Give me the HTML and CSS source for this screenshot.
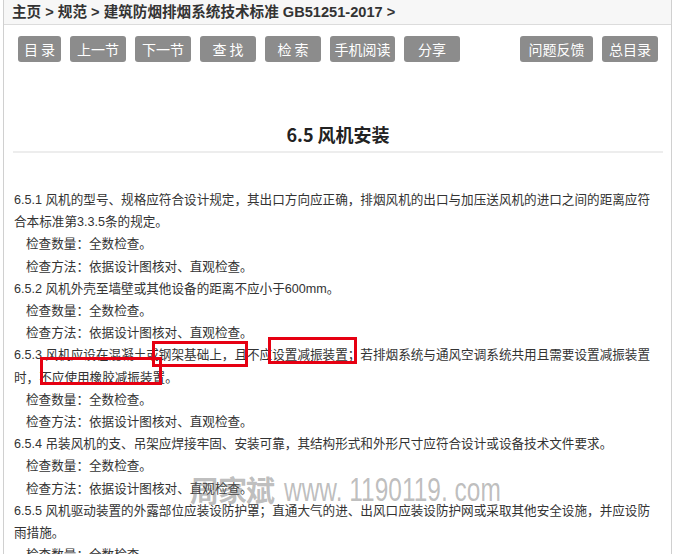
FILE: index.html
```html
<!DOCTYPE html>
<html lang="zh-CN">
<head>
    <meta charset="UTF-8">
    <title>6.5 风机安装</title>
    <link rel="stylesheet" href="styles.css">
</head>
<body>
<div class="page">
    <div class="crumbs">主页 &gt; 规范 &gt; 建筑防烟排烟系统技术标准 GB51251-2017 &gt;</div>

    <div class="tools">
        <div class="group">
            <a class="btn btn-s" href="#">目 录</a>
            <a class="btn" href="#">上一节</a>
            <a class="btn" href="#">下一节</a>
            <a class="btn" href="#">查 找</a>
            <a class="btn" href="#">检 索</a>
            <a class="btn btn-m" href="#">手机阅读</a>
            <a class="btn" href="#">分享</a>
        </div>
        <div class="group">
            <a class="btn btn-l" href="#">问题反馈</a>
            <a class="btn" href="#">总目录</a>
        </div>
    </div>

    <div class="content">
        <h1 class="title">6.5 风机安装</h1>
        <div class="text">
            <p>6.5.1 风机的型号、规格应符合设计规定，其出口方向应正确，排烟风机的出口与加压送风机的进口之间的距离应符合本标准第3.3.5条的规定。</p>
            <p class="sub">检查数量：全数检查。</p>
            <p class="sub">检查方法：依据设计图核对、直观检查。</p>
            <p>6.5.2 风机外壳至墙壁或其他设备的距离不应小于600mm。</p>
            <p class="sub">检查数量：全数检查。</p>
            <p class="sub">检查方法：依据设计图核对、直观检查。</p>
            <p>6.5.3 风机应设在混凝土或钢架基础上，且不应设置减振装置；若排烟系统与通风空调系统共用且需要设置减振装置时，不应使用橡胶减振装置。</p>
            <p class="sub">检查数量：全数检查。</p>
            <p class="sub">检查方法：依据设计图核对、直观检查。</p>
            <p>6.5.4 吊装风机的支、吊架应焊接牢固、安装可靠，其结构形式和外形尺寸应符合设计或设备技术文件要求。</p>
            <p class="sub">检查数量：全数检查。</p>
            <p class="sub">检查方法：依据设计图核对、直观检查。</p>
            <p>6.5.5 风机驱动装置的外露部位应装设防护罩；直通大气的进、出风口应装设防护网或采取其他安全设施，并应设防雨措施。</p>
            <p class="sub">检查数量：全数检查。</p>
        </div>
    </div>

    <span class="mark mark1"></span>
    <span class="mark mark2"></span>
    <span class="mark mark3"></span>

    <div class="watermark"><span class="wm-name">周家斌</span><span class="wm-url">www. 1190119. com</span></div>
</div>
</body>
</html>
```

FILE: styles.css
```css
* {
    margin: 0;
    padding: 0;
}
body {
    background: #fff;
    font-family: "Noto Sans CJK SC", "Noto Sans", sans-serif;
    color: #333;
}
.page {
    position: relative;
    width: 667px;
    height: 554px;
    margin-left: 3px;
    border-left: 1px solid #d0d0d0;
    border-right: 1px solid #d0d0d0;
    overflow: hidden;
}
.crumbs {
    height: 24px;
    line-height: 24px;
    padding-left: 8px;
    background: #f7f7f7;
    border-bottom: 1px solid #dcdcdc;
    font-family: "Liberation Sans", "Noto Sans CJK SC", sans-serif;
    font-size: 14.6px;
    font-weight: bold;
    color: #333;
    white-space: nowrap;
}
.tools {
    display: flex;
    justify-content: space-between;
    padding: 11px 13px 0 14px;
}
.group {
    display: flex;
    gap: 9px;
}
.btn {
    display: block;
    width: 56px;
    height: 26px;
    line-height: 26px;
    text-align: center;
    background: #8c8c8c;
    color: #fff;
    font-size: 14px;
    text-decoration: none;
    border-radius: 3px;
    white-space: pre;
}
.btn-s {
    width: 43px;
}
.btn-m {
    width: 65px;
}
.btn-l {
    width: 73px;
}
.content {
    padding: 0 8px 0 9px;
}
.title {
    margin-top: 57px;
    height: 30px;
    line-height: 30px;
    padding-bottom: 2px;
    border-bottom: 2px solid #ededed;
    text-align: center;
    font-size: 18px;
    font-weight: bold;
    color: #222;
}
.text {
    margin-top: 36px;
    padding: 0 4px 0 1px;
    font-family: "Liberation Sans", "Noto Sans CJK SC", sans-serif;
    font-size: 12.6px;
    line-height: 22.2px;
    color: #333;
}
.text .sub {
    padding-left: 12px;
}
.mark {
    position: absolute;
    box-sizing: border-box;
    border: 3px solid #e60012;
}
.mark1 {
    left: 148px;
    top: 341px;
    width: 96px;
    height: 26px;
}
.mark2 {
    left: 264px;
    top: 337px;
    width: 89px;
    height: 27px;
}
.mark3 {
    left: 36px;
    top: 357px;
    width: 122px;
    height: 28px;
}
.watermark {
    position: absolute;
    left: 186px;
    top: 468px;
    display: flex;
    align-items: center;
    color: rgba(110, 110, 110, 0.45);
    white-space: nowrap;
}
.wm-name {
    font-size: 29px;
    font-weight: bold;
    letter-spacing: -1px;
}
.wm-url {
    display: inline-block;
    margin-left: 10px;
    font-family: "Liberation Sans", Arial, sans-serif;
    font-size: 34px;
    transform: scaleX(0.72);
    transform-origin: left center;
}
```
